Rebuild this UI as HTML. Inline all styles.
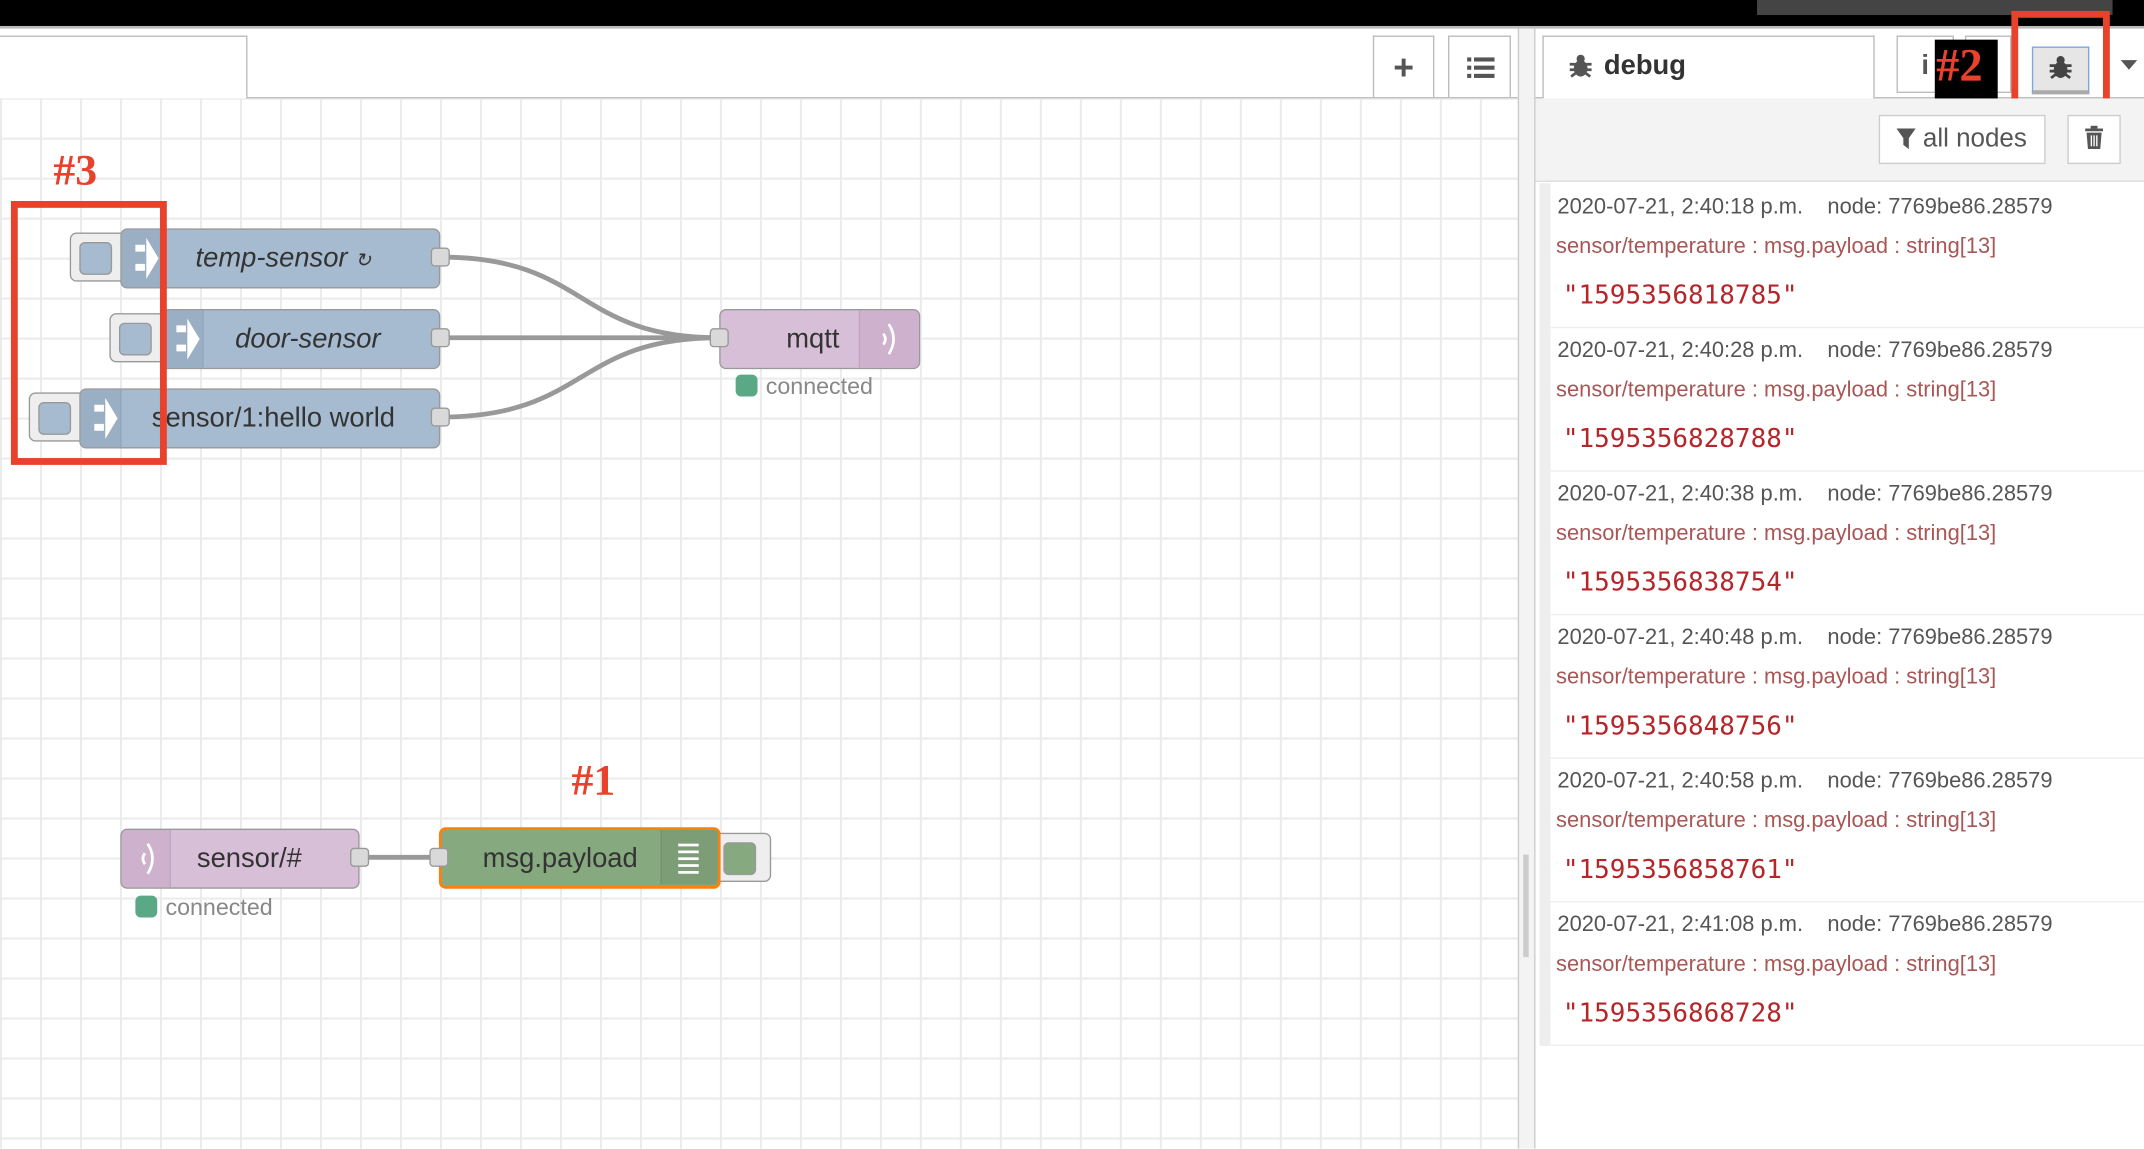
<!DOCTYPE html>
<html><head><meta charset="utf-8"><style>
html,body{margin:0;padding:0;width:2144px;height:1148px;overflow:hidden;background:#fff}
#w{position:absolute;left:0;top:0;width:1568px;height:840px;transform:scale(1.36735);transform-origin:0 0;font-family:"Liberation Sans",Arial,sans-serif;overflow:hidden}
.a{position:absolute;box-sizing:border-box}
.node{position:absolute;box-sizing:border-box;border:1px solid #999;border-radius:5px;height:44px}
.lbl{position:absolute;font-size:20px;color:#333;top:10px;white-space:nowrap}
.port{position:absolute;width:14px;height:14px;background:#d9d9d9;border:1px solid #999;border-radius:3px;box-sizing:border-box}
.btn{position:absolute;box-sizing:border-box;background:#eee;border:1px solid #999;border-radius:5px;height:36px}
.btn i{position:absolute;left:6px;top:6px;width:24px;height:24px;border:1px solid #999;border-radius:4px;box-sizing:border-box}
.msg{position:absolute;left:1134px;width:434px;height:105px;border-bottom:1px solid #eee;box-sizing:border-box}
.msg .d{position:absolute;left:5px;top:8px;font-size:16px;color:#555;white-space:pre}
.msg .t{position:absolute;left:4px;top:37px;font-size:16px;color:#a85656;white-space:pre}
.msg .v{position:absolute;left:9px;top:70px;font-size:19px;color:#b5262a;font-family:"DejaVu Sans Mono","Liberation Mono",monospace}
.red{position:absolute;font-family:"Liberation Serif",serif;font-weight:bold;color:#e8412c;font-size:32px}
</style></head><body><div id="w">
<div class="a" style="left:0;top:0;width:1568px;height:19px;background:#000"></div>
<div class="a" style="left:1285px;top:0;width:260px;height:11px;background:#444"></div>
<div class="a" style="left:0;top:19px;width:1568px;height:2px;background:#bbb"></div>
<div class="a" style="left:0;top:21px;width:1110px;height:51px;background:#fff;border-bottom:1px solid #bbb"></div>
<div class="a" style="left:-2px;top:26px;width:183px;height:46px;background:#fff;border:1px solid #bbb;border-bottom:none"></div>
<div class="a" style="left:1004px;top:26px;width:45px;height:45px;border:1px solid #bbb;border-bottom:none;text-align:center;font-size:26px;line-height:45px;color:#555;font-weight:bold">+</div>
<div class="a" style="left:1059px;top:26px;width:46px;height:45px;border:1px solid #bbb;border-bottom:none">
<svg width="46" height="45"><g fill="#555"><rect x="13" y="15" width="3" height="3"/><rect x="13" y="21" width="3" height="3"/><rect x="13" y="27" width="3" height="3"/><rect x="18" y="15" width="15" height="3"/><rect x="18" y="21" width="15" height="3"/><rect x="18" y="27" width="15" height="3"/></g></svg></div>
<div class="a" style="left:0;top:72px;width:1110px;height:768px;background-color:#fff;background-image:linear-gradient(to right,#ebebeb 1.5px,transparent 1.5px),linear-gradient(to bottom,#ebebeb 1.5px,transparent 1.5px);background-size:29.25px 29.25px;background-position:0 -0.6px"></div>
<svg class="a" style="left:0;top:0" width="1110" height="840"><g fill="none" stroke="#999" stroke-width="3.5">
<path d="M322 188 C430 188 420 247 526 247"/><path d="M322 247 L526 247"/><path d="M322 305 C430 305 420 247 526 247"/><path d="M263 627 L321 627"/></g></svg>
<div class="btn" style="left:51px;top:170px;width:42px"><i style="background:#a6bbcf"></i></div>
<div class="node" style="left:88px;top:167px;width:234px;background:#a6bbcf"><div class="a" style="left:0;top:0;width:30px;height:42px;background:#9aafc3;border-right:1px solid #8fa4b8;border-radius:4px 0 0 4px"></div><svg class="a" style="left:6px;top:1px" width="22" height="40"><path d="M4 10h7v5H4zM4 24h7v5H4zM12 5l9 15-9 15z" fill="#fff"/></svg><span class="lbl" style="left:54px;font-style:italic">temp-sensor <span style="font-size:14px">↻</span></span></div>
<div class="port" style="left:315px;top:181px"></div>
<div class="btn" style="left:80px;top:229px;width:42px"><i style="background:#a6bbcf"></i></div>
<div class="node" style="left:118px;top:226px;width:204px;background:#a6bbcf"><div class="a" style="left:0;top:0;width:30px;height:42px;background:#9aafc3;border-right:1px solid #8fa4b8;border-radius:4px 0 0 4px"></div><svg class="a" style="left:6px;top:1px" width="22" height="40"><path d="M4 10h7v5H4zM4 24h7v5H4zM12 5l9 15-9 15z" fill="#fff"/></svg><span class="lbl" style="left:53px;font-style:italic">door-sensor</span></div>
<div class="port" style="left:315px;top:240px"></div>
<div class="btn" style="left:21px;top:287px;width:42px"><i style="background:#a6bbcf"></i></div>
<div class="node" style="left:58px;top:284px;width:264px;background:#a6bbcf"><div class="a" style="left:0;top:0;width:30px;height:42px;background:#9aafc3;border-right:1px solid #8fa4b8;border-radius:4px 0 0 4px"></div><svg class="a" style="left:6px;top:1px" width="22" height="40"><path d="M4 10h7v5H4zM4 24h7v5H4zM12 5l9 15-9 15z" fill="#fff"/></svg><span class="lbl" style="left:52px">sensor/1:hello world</span></div>
<div class="port" style="left:315px;top:298px"></div>
<div class="node" style="left:526px;top:226px;width:147px;background:#d8bfd8"><div class="a" style="right:0;top:0;width:44px;height:42px;background:#cdb1cd;border-left:1px solid #bfa3bf;border-radius:0 4px 4px 0"></div><svg class="a" style="right:10px;top:6px" width="24" height="30"><g fill="none" stroke="#fff" stroke-width="2"><path d="M8 11q3 4 0 8"/><path d="M12 4q7 11 0 22"/></g></svg><span class="lbl" style="left:48px">mqtt</span></div>
<div class="port" style="left:519px;top:240px"></div>
<div class="a" style="left:538px;top:274px;width:16px;height:16px;background:#5aa886;border-radius:4px"></div>
<div class="a" style="left:560px;top:273px;font-size:17px;color:#888">connected</div>
<div class="node" style="left:88px;top:606px;width:175px;background:#d8bfd8"><div class="a" style="left:0;top:0;width:36px;height:42px;background:#cdb1cd;border-right:1px solid #bfa3bf;border-radius:4px 0 0 4px"></div><svg class="a" style="left:6px;top:6px" width="24" height="30"><g fill="none" stroke="#fff" stroke-width="2"><path d="M11 11q-3 4 0 8"/><path d="M13 4q7 11 0 22"/></g></svg><span class="lbl" style="left:55px">sensor/#</span></div>
<div class="port" style="left:256px;top:620px"></div>
<div class="a" style="left:99px;top:655px;width:16px;height:16px;background:#5aa886;border-radius:4px"></div>
<div class="a" style="left:121px;top:654px;font-size:17px;color:#888">connected</div>
<div class="btn" style="left:522px;top:609px;width:42px"><i style="background:#87a980"></i></div>
<div class="node" style="left:321px;top:605px;width:206px;height:45px;background:#87a980;border:2.5px solid #ff7f0e"><div class="a" style="right:0;top:0;width:42px;height:40px;background:#7c9d75;border-left:1px solid #6f9068;border-radius:0 3px 3px 0"></div><svg class="a" style="right:12px;top:8px" width="18" height="26"><g fill="#fff"><rect x="1" y="2" width="15" height="2"/><rect x="1" y="7" width="15" height="2"/><rect x="1" y="12" width="15" height="2"/><rect x="1" y="17" width="15" height="2"/><rect x="1" y="22" width="15" height="2"/></g></svg><span class="lbl" style="left:30px;top:10px">msg.payload</span></div>
<div class="port" style="left:314px;top:620px"></div>
<div class="a" style="left:8px;top:147px;width:114px;height:193px;border:5px solid #e8412c"></div>
<div class="red" style="left:39px;top:106px">#3</div>
<div class="red" style="left:418px;top:552px">#1</div>
<div class="a" style="left:1110px;top:21px;width:13px;height:819px;background:#f3f3f3;border-left:1px solid #ccc;border-right:1px solid #ccc"></div>
<div class="a" style="left:1114px;top:625px;width:4px;height:75px;background:#ccc"></div>
<div class="a" style="left:1123px;top:21px;width:445px;height:51px;background:#fff;border-bottom:1px solid #bbb"></div>
<div class="a" style="left:1128px;top:26px;width:243px;height:47px;background:#fff;border:1px solid #bbb;border-bottom:none"></div>
<svg class="a" style="left:1146px;top:38px" width="20" height="20"><g fill="#555"><ellipse cx="10" cy="12" rx="5" ry="6"/><circle cx="10" cy="5" r="3"/><path d="M2 9h16M2 13h16M3 18l4-3M17 18l-4-3" stroke="#555" stroke-width="2"/></g></svg>
<div class="a" style="left:1173px;top:37px;font-size:20px;font-weight:bold;color:#333">debug</div>
<div class="a" style="left:1387px;top:26px;width:42px;height:42px;border:1px solid #bbb;text-align:center;font-weight:bold;font-size:20px;line-height:42px;color:#555">i</div>
<div class="a" style="left:1437px;top:26px;width:34px;height:42px;border:1px solid #bbb"></div>
<div class="a" style="left:1415px;top:29px;width:46px;height:46px;background:#000"></div>
<div class="a" style="left:1416px;top:30px;font-family:'Liberation Serif',serif;font-weight:bold;color:#e8412c;font-size:34px">#2</div>
<div class="a" style="left:1486px;top:34px;width:42px;height:35px;background:#e6e6e6;border:1px solid #7aa7e0;border-bottom:3px solid #aaa"></div>
<svg class="a" style="left:1497px;top:39px" width="20" height="20"><g fill="#444"><ellipse cx="10" cy="12" rx="5" ry="6"/><circle cx="10" cy="5" r="3"/><path d="M2 9h16M2 13h16M3 18l4-3M17 18l-4-3" stroke="#444" stroke-width="2"/></g></svg>
<div class="a" style="left:1471px;top:8px;width:72px;height:72px;border:5px solid #e8412c"></div>
<svg class="a" style="left:1550px;top:42px" width="14" height="10"><path d="M1 2h12L7 9z" fill="#555"/></svg>
<div class="a" style="left:1123px;top:72px;width:445px;height:61px;background:#f3f3f3;border-bottom:1px solid #ddd"></div>
<div class="a" style="left:1374px;top:84px;width:122px;height:36px;background:#fff;border:1px solid #ccc;font-size:19px;color:#555;line-height:34px;padding-left:12px"><svg width="14" height="16" style="vertical-align:-2px"><path d="M0 1h14L9 8v8L5 13V8z" fill="#555"/></svg> all nodes</div>
<div class="a" style="left:1512px;top:84px;width:39px;height:36px;background:#fff;border:1px solid #ccc"><svg width="37" height="34"><g fill="#555"><rect x="12" y="9" width="13" height="2"/><rect x="16" y="7" width="5" height="2"/><path d="M13 12h11l-1 12h-9z"/></g><g stroke="#fff" stroke-width="1"><path d="M16.5 14v8M18.5 14v8M20.5 14v8"/></g></svg></div>
<div class="a" style="left:1123px;top:134px;width:445px;height:706px;background:#fff"></div>
<div class="a" style="left:1126px;top:134px;width:8px;height:631px;background:#eee"></div>
<div class="msg" style="top:135px"><span class="d">2020-07-21, 2:40:18 p.m.    node: 7769be86.28579</span><span class="t">sensor/temperature : msg.payload : string[13]</span><span class="v">"1595356818785"</span></div>
<div class="msg" style="top:240px"><span class="d">2020-07-21, 2:40:28 p.m.    node: 7769be86.28579</span><span class="t">sensor/temperature : msg.payload : string[13]</span><span class="v">"1595356828788"</span></div>
<div class="msg" style="top:345px"><span class="d">2020-07-21, 2:40:38 p.m.    node: 7769be86.28579</span><span class="t">sensor/temperature : msg.payload : string[13]</span><span class="v">"1595356838754"</span></div>
<div class="msg" style="top:450px"><span class="d">2020-07-21, 2:40:48 p.m.    node: 7769be86.28579</span><span class="t">sensor/temperature : msg.payload : string[13]</span><span class="v">"1595356848756"</span></div>
<div class="msg" style="top:555px"><span class="d">2020-07-21, 2:40:58 p.m.    node: 7769be86.28579</span><span class="t">sensor/temperature : msg.payload : string[13]</span><span class="v">"1595356858761"</span></div>
<div class="msg" style="top:660px"><span class="d">2020-07-21, 2:41:08 p.m.    node: 7769be86.28579</span><span class="t">sensor/temperature : msg.payload : string[13]</span><span class="v">"1595356868728"</span></div>
</div></body></html>
